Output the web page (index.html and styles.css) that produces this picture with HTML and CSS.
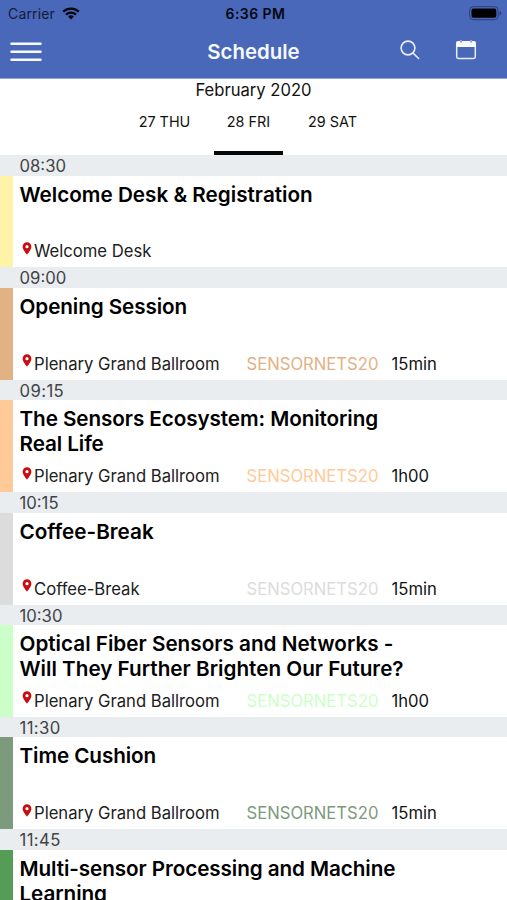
FILE: index.html
```html
<!DOCTYPE html>
<html lang="en">
<head>
<meta charset="utf-8">
<title>Schedule</title>
<link rel="stylesheet" href="styles.css">
</head>
<body>
<svg class="defs" width="0" height="0"><symbol id="pin" viewBox="0 0 10 13"><path fill="#c80d12" fill-rule="evenodd" d="M5 0.3A4.400 4.400 0 0 0 .6 4.700C.6 7.800 5 12.600 5 12.600S9.400 7.800 9.400 4.700A4.400 4.400 0 0 0 5 .3ZM5 3.100A1.600 1.600 0 1 1 5 6.300A1.600 1.600 0 0 1 5 3.100Z"/></symbol></svg>
<div class="app">
<header class="top">
  <div class="status">
    <div class="carrier"><span>Carrier</span>
      <svg class="wifi" width="18" height="13" viewBox="0 0 18 13"><g fill="none" stroke="#05070f" stroke-width="2.300"><path d="M1.200 4.700a11.200 11.200 0 0 1 15.600 0"/><path d="M4 7.700a7.200 7.200 0 0 1 10 0"/></g><path fill="#05070f" d="M6.100 9.600a4.200 4.200 0 0 1 5.800 0L9 12.600Z"/></svg>
    </div>
    <div class="clock">6:36 PM</div>
    <svg class="battery" width="33" height="15" viewBox="0 0 33 15"><rect x=".7" y=".7" width="28.400" height="13" rx="3.500" fill="none" stroke="#2c3f78"/><rect x="2.500" y="2.600" width="24.800" height="9.200" rx="1.800"/><path fill="#2c3f78" d="M30.500 5q1.800.7 1.800 2.200t-1.800 2.200Z"/></svg>
  </div>
  <nav class="bar">
    <svg class="menu" width="32" height="20" viewBox="0 0 32 20"><path d="M1.500 1.700h29M1.500 9.700h29M1.500 17.700h29" stroke="#f7f9ff" stroke-width="2.500" stroke-linecap="round"/></svg>
    <h1>Schedule</h1>
    <div class="actions">
      <svg width="20" height="20" viewBox="0 0 20 20" fill="none" stroke="#e9eefc" stroke-width="1.600" stroke-linecap="round"><circle cx="8" cy="8" r="6.900"/><path d="m13 13 5.600 5.500"/></svg>
      <svg width="22" height="20" viewBox="0 0 22 20"><path d="M1.700 6v10.800q0 1.700 1.700 1.700h15.200q1.700 0 1.700-1.700V6" fill="none" stroke="#e9eefc" stroke-width="1.500"/><path fill="#f7f9ff" d="M1 7V3Q1 1 3 1h2q.2 1.500 1 1.500T7 1h8q.2 1.500 1 1.500T17 1h2q2 0 2 2V7Z"/><path d="M6 .2v1.200M16 .2v1.200" stroke="#f7f9ff" stroke-width="1.200"/></svg>
    </div>
  </nav>
</header>
<section class="dates">
  <div class="month">February 2020</div>
  <div class="days"><div class="day">27 THU</div><div class="day active">28 FRI</div><div class="day">29 SAT</div></div>
</section>
<main>
  <div class="time">08:30</div>
  <article class="yellow"><h2>Welcome Desk &amp; Registration</h2><div class="meta"><svg class="pin"><use href="#pin"/></svg><span class="place">Welcome Desk</span></div></article>
  <div class="time">09:00</div>
  <article class="tan"><h2>Opening Session</h2><div class="meta"><svg class="pin"><use href="#pin"/></svg><span class="place">Plenary Grand Ballroom</span><span class="tag">SENSORNETS20</span><span class="length">15min</span></div></article>
  <div class="time wide">09:15</div>
  <article class="peach"><h2>The Sensors Ecosystem: Monitoring<br>Real Life</h2><div class="meta"><svg class="pin"><use href="#pin"/></svg><span class="place">Plenary Grand Ballroom</span><span class="tag">SENSORNETS20</span><span class="length">1h00</span></div></article>
  <div class="time">10:15</div>
  <article class="grey"><h2>Coffee-Break</h2><div class="meta"><svg class="pin"><use href="#pin"/></svg><span class="place">Coffee-Break</span><span class="tag">SENSORNETS20</span><span class="length">15min</span></div></article>
  <div class="time">10:30</div>
  <article class="mint"><h2>Optical Fiber Sensors and Networks -<br>Will They Further Brighten Our Future?</h2><div class="meta"><svg class="pin"><use href="#pin"/></svg><span class="place">Plenary Grand Ballroom</span><span class="tag">SENSORNETS20</span><span class="length">1h00</span></div></article>
  <div class="time wide">11:30</div>
  <article class="sage"><h2>Time Cushion</h2><div class="meta"><svg class="pin"><use href="#pin"/></svg><span class="place">Plenary Grand Ballroom</span><span class="tag">SENSORNETS20</span><span class="length">15min</span></div></article>
  <div class="time wide">11:45</div>
  <article class="green"><h2>Multi-sensor Processing and Machine<br>Learning</h2></article>
</main>
</div>
</body>
</html>
```
FILE: styles.css
```css
* { box-sizing: border-box; }
body { margin: 0; background: #fff; color: #111; font-family: Inter, "Liberation Sans", sans-serif; }
.defs { display: block; }
.app { height: 900px; overflow: hidden; }
.top { height: 79px; background: #4968b9; border-bottom: 1px solid #91a5d8; }
.status { display: grid; grid-template-columns: 1fr auto 1fr; align-items: center; height: 27px; padding: 0 5px 0 8px; color: #05070f; }
.carrier { display: flex; align-items: center; gap: 7px; font-size: 14px; letter-spacing: .15px; color: #131c38; }
.clock { font-size: 14px; font-weight: 600; letter-spacing: .45px; padding-left: 1px; }
.battery { justify-self: end; }
.bar { display: grid; grid-template-columns: 1fr auto 1fr; align-items: center; height: 49px; padding: 0 10px; }
h1 { margin: 0; font-size: 20.400px; font-weight: 600; color: #f7f9ff; }
.actions { display: flex; justify-content: flex-end; gap: 35px; padding-right: 20px; margin-top: -4px; }
.dates { height: 76px; }
.month { height: 22px; line-height: 22px; font-size: 16.600px; text-align: center; }
.days { display: flex; justify-content: center; gap: 15px; height: 54px; padding-right: 10px; }
.day { width: 69px; font-size: 14.400px; line-height: 42px; text-align: center; white-space: nowrap; }
.active { border-bottom: 4px solid #070909; }
.time { height: 20.500px; padding-left: 19.500px; background: #e9edf0; color: #414345; font-size: 16.700px; line-height: 22px; }
.wide { letter-spacing: .4px; }
article { display: flex; flex-direction: column; justify-content: space-between; height: 91.900px; padding: 6px 0 5px 6.500px; border-left: 13px solid; }
h2 { margin: 0; font-size: 20.700px; font-weight: 600; line-height: 25px; color: #000; white-space: nowrap; }
.meta { display: grid; grid-template-columns: 14.500px 212.500px 145px auto; align-items: center; height: 22px; font-size: 16.650px; line-height: 22px; color: #202020; white-space: nowrap; }
.pin { width: 10px; height: 13px; margin: -6px 0 0 2px; }
.length { color: #111; }
.yellow { border-color: #fff3a8; }
.tan { border-color: #e2b184; }
.peach { border-color: #ffca97; }
.grey { border-color: #dcdcdc; }
.mint { border-color: #ccffc8; }
.sage { border-color: #7c9b7c; }
.green { border-color: #559c56; }
.peach h2, .sage h2, .tan h2, .green h2 { letter-spacing: -.09px; }
.tan .tag { color: #e2b184; }
.peach .tag { color: #ffca97; }
.grey .tag { color: #dcdcdc; }
.mint .tag { color: #ccffc8; }
.sage .tag { color: #7c9b7c; }
```
